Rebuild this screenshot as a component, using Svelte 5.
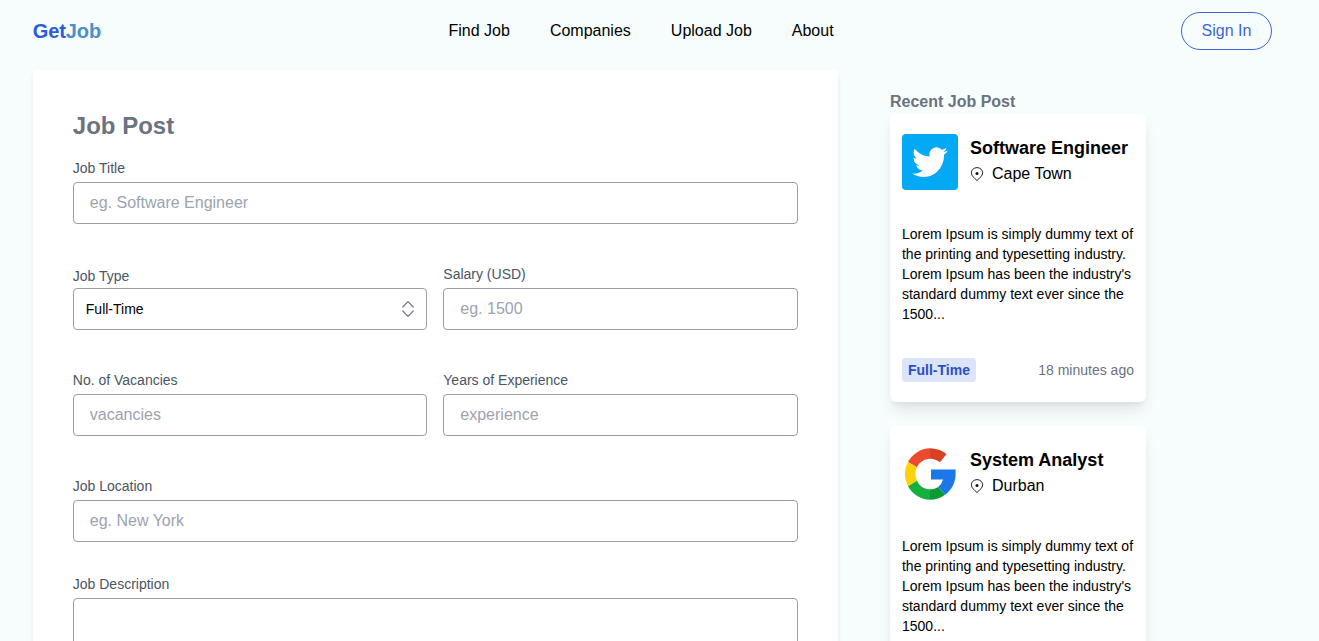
<script>
  const links = ['Find Job', 'Companies', 'Upload Job', 'About'];
  const summary =
    "Lorem Ipsum is simply dummy text of the printing and typesetting industry. Lorem Ipsum has been the industry's standard dummy text ever since the 1500...";
  const jobs = [
    { title: 'Software Engineer', place: 'Cape Town', logo: 'twitter', ago: '18 minutes ago' },
    { title: 'System Analyst', place: 'Durban', logo: 'google' }
  ];
</script>

<div class="page">
  <header>
    <div class="brand"><span>Get</span><span class="light">Job</span></div>
    <nav>
      {#each links as link}<a href="#top">{link}</a>{/each}
    </nav>
    <button class="signin" type="button">Sign In</button>
  </header>

  <main>
    <form>
      <h2>Job Post</h2>
      <div class="field">
        <label for="title">Job Title</label>
        <input id="title" placeholder="eg. Software Engineer" />
      </div>
      <div class="row">
        <div class="field type">
          <span class="label">Job Type</span>
          <button class="select" type="button">
            <span>Full-Time</span>
            <svg width="20" height="20" viewBox="0 0 20 20" fill="none" stroke="#71757f" stroke-width="1.2" stroke-linecap="round" stroke-linejoin="round">
              <path d="M4.8 8 10 2.7 15.2 8M4.8 12 10 17.3 15.2 12" />
            </svg>
          </button>
        </div>
        <div class="field">
          <label for="salary">Salary (USD)</label>
          <input id="salary" placeholder="eg. 1500" />
        </div>
      </div>
      <div class="row">
        <div class="field">
          <label for="vacancies">No. of Vacancies</label>
          <input id="vacancies" placeholder="vacancies" />
        </div>
        <div class="field">
          <label for="experience">Years of Experience</label>
          <input id="experience" placeholder="experience" />
        </div>
      </div>
      <div class="field">
        <label for="location">Job Location</label>
        <input id="location" placeholder="eg. New York" />
      </div>
      <div class="field description">
        <label for="description">Job Description</label>
        <textarea id="description"></textarea>
      </div>
    </form>

    <aside>
      <h3>Recent Job Post</h3>
      {#each jobs as job}
        <article>
          <div class="top">
            {#if job.logo === 'twitter'}
              <svg class="logo" viewBox="0 0 56 56">
                <rect width="56" height="56" rx="4" fill="#03a9f4" />
                <path transform="translate(10.2 9.9) scale(1.475 1.52)" fill="#fff" d="M23.953 4.57a10 10 0 01-2.825.775 4.958 4.958 0 002.163-2.723c-.951.555-2.005.959-3.127 1.184a4.92 4.92 0 00-8.384 4.482C7.69 8.095 4.067 6.13 1.64 3.162a4.822 4.822 0 00-.666 2.475c0 1.71.87 3.213 2.188 4.096a4.904 4.904 0 01-2.228-.616v.06a4.923 4.923 0 003.946 4.827 4.996 4.996 0 01-2.212.085 4.936 4.936 0 004.604 3.417 9.867 9.867 0 01-6.102 2.105c-.39 0-.779-.023-1.17-.067a13.995 13.995 0 007.557 2.209c9.053 0 13.998-7.496 13.998-13.985 0-.21 0-.42-.015-.63A9.935 9.935 0 0024 4.59z" />
              </svg>
            {:else}
              <svg class="logo" viewBox="0 0 56 56">
                <path fill="#ea4a2f" d="M28 2.2v10.5c-5.8 0-10.8 3.5-13 8.6L6 16A25.8 25.8 0 0128 2.2z" />
                <path fill="#d93f21" d="M28 2.2c6.4 0 12 2.1 16.5 5.8L38 16.2c-2.8-2.2-6.2-3.5-10-3.5z" />
                <path fill="#fdd20a" d="M6 16l9 5.3a15.3 15.3 0 000 13.4L6 40.2a25.8 25.8 0 010-24.2z" />
                <path fill="#14b13e" d="M6 40.2l9-5.5c2.2 5.1 7.2 8.6 13 8.6v10.5A25.8 25.8 0 016 40.2z" />
                <path fill="#0c9a35" d="M28 43.3c3 0 5.8-.8 8.1-2.3l7 7.8A25.6 25.6 0 0128 53.8z" />
                <path fill="#1a78e8" d="M29 23.6h24.6V28c0 8.6-4.1 16.2-10.5 20.8L36.1 41a14.8 14.8 0 005-7.5H29z" />
              </svg>
            {/if}
            <div class="who">
              <h4>{job.title}</h4>
              <div class="place">
                <svg width="14" height="14" viewBox="0 0 14 14">
                  <path d="M7 13.5C4.7 11.4 1.3 8.7 1.3 5.9a5.7 5.3 0 0111.4 0C12.7 8.7 9.3 11.4 7 13.5z" fill="none" stroke="#252932" stroke-width="1" />
                  <circle cx="7" cy="6.6" r="1.5" fill="#10131a" />
                </svg>
                <span>{job.place}</span>
              </div>
            </div>
          </div>
          <p>{summary}</p>
          {#if job.ago}
            <div class="bottom">
              <span class="badge">Full-Time</span>
              <span class="ago">{job.ago}</span>
            </div>
          {/if}
        </article>
      {/each}
    </aside>
  </main>
</div>

<style>
  :global(body) {
    margin: 0;
    overflow: hidden;
  }
  .page {
    height: 641px;
    overflow: hidden;
    background: #f7fdfd;
    font-family: 'Liberation Sans', Arial, sans-serif;
    font-size: 16px;
    line-height: 24px;
    color: #000;
  }
  .page * {
    box-sizing: border-box;
  }
  header {
    display: flex;
    align-items: center;
    justify-content: space-between;
    height: 70px;
    padding: 0 47px 8px 32.8px;
  }
  .brand {
    font-size: 20px;
    line-height: 28px;
    font-weight: 700;
    letter-spacing: -0.1px;
    color: #2c5bd8;
  }
  .brand .light {
    color: #4a8fc9;
  }
  nav {
    display: flex;
    gap: 40px;
  }
  nav a {
    color: inherit;
    text-decoration: none;
  }
  .signin {
    width: 91px;
    height: 38px;
    padding: 0;
    border: 1px solid #3b66d6;
    border-radius: 19px;
    background: transparent;
    color: #3b66d6;
    font: inherit;
  }
  main {
    display: flex;
    align-items: flex-start;
    gap: 52.2px;
    padding-left: 32.8px;
  }
  form {
    width: 805px;
    height: 760px;
    flex: none;
    padding: 40px;
    background: #fff;
    border-radius: 4px;
    box-shadow: 0 4px 6px -1px rgba(0, 0, 0, 0.08), 0 2px 4px -1px rgba(0, 0, 0, 0.04);
  }
  h2, h3, h4, p {
    margin: 0;
  }
  h2 {
    margin-bottom: 16px;
    font-size: 24px;
    line-height: 32px;
    color: #6b7280;
  }
  .field {
    display: flex;
    flex-direction: column;
    gap: 4px;
    margin-bottom: 40px;
  }
  .type {
    padding-top: 2px;
    gap: 2px;
  }
  .description {
    margin-top: -8px;
  }
  .row {
    display: grid;
    grid-template-columns: 1fr 1fr;
    gap: 16px;
  }
  label, .label {
    font-size: 14px;
    line-height: 20px;
    color: #4b5563;
  }
  input, textarea, .select {
    width: 100%;
    height: 42px;
    padding: 0 16px;
    border: 1px solid #9a9da6;
    border-radius: 4px;
    background: #fff;
    font: inherit;
    outline: none;
  }
  textarea {
    height: 120px;
    resize: none;
  }
  input::placeholder {
    color: #9ca3af;
    opacity: 1;
  }
  .select {
    display: flex;
    align-items: center;
    justify-content: space-between;
    padding: 0 8px 0 12px;
    font-size: 14px;
    color: #000;
  }
  aside {
    width: 256px;
    padding-top: 20px;
  }
  h3 {
    font-size: 16px;
    line-height: 24px;
    color: #6b7280;
  }
  article {
    height: 288px;
    margin-bottom: 24px;
    padding: 20px 12px;
    background: #fff;
    border-radius: 6px;
    box-shadow: 0 10px 15px -3px rgba(0, 0, 0, 0.1), 0 4px 6px -2px rgba(0, 0, 0, 0.05);
  }
  .top {
    display: flex;
    gap: 12px;
  }
  .logo {
    width: 56px;
    height: 56px;
    flex: none;
  }
  h4 {
    font-size: 18px;
    line-height: 28px;
    white-space: nowrap;
  }
  .place {
    display: flex;
    align-items: center;
    gap: 8px;
  }
  p {
    margin: 34px 0;
    font-size: 14px;
    line-height: 20px;
  }
  .bottom {
    display: flex;
    align-items: center;
    justify-content: space-between;
    font-size: 14px;
  }
  .badge {
    padding: 0 6px;
    border-radius: 4px;
    background: #dbe4f9;
    color: #2a4fc4;
    font-weight: 700;
  }
  .ago {
    color: #6b7280;
  }
</style>
